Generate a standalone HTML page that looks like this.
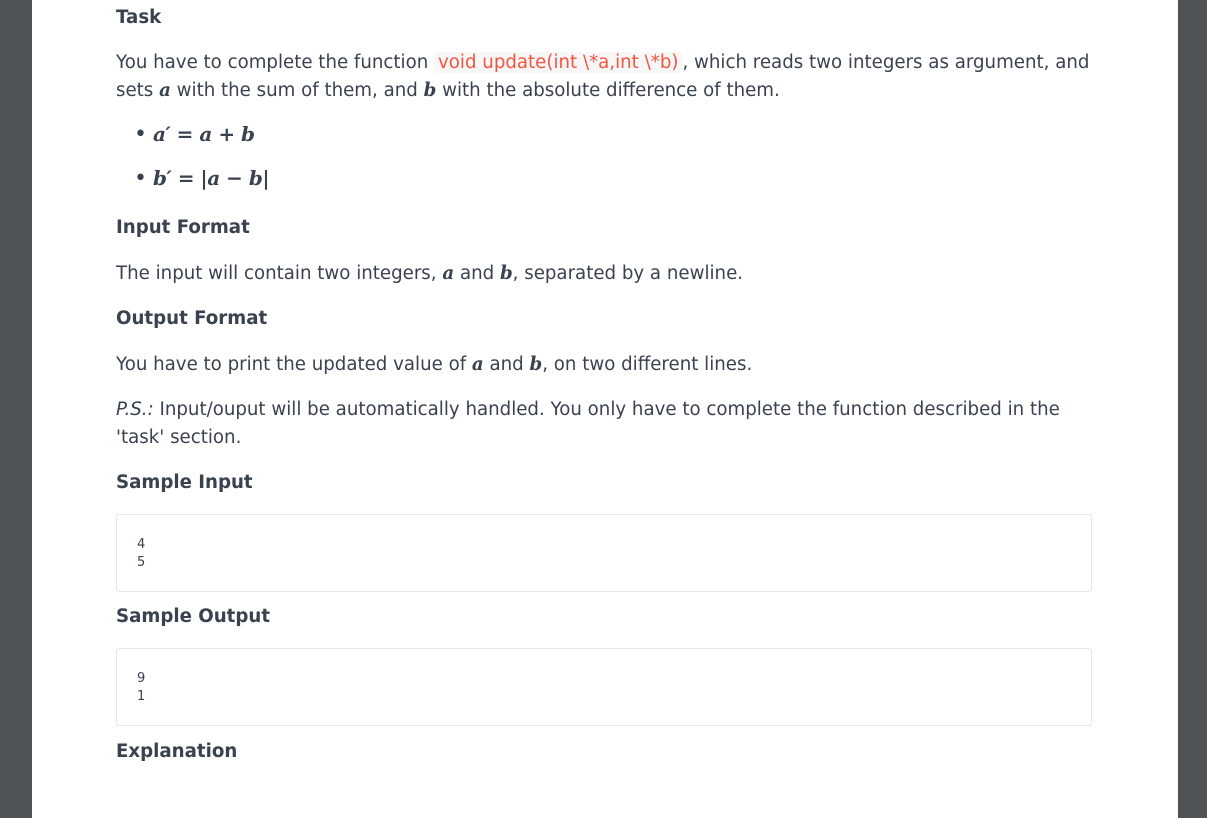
<!DOCTYPE html>
<html><head><meta charset="utf-8"><style>
body{margin:0;width:1207px;height:818px;background:#4f5356;position:relative;overflow:hidden;font-family:"DejaVu Sans","Liberation Sans",sans-serif;color:#39424e;}
.page{position:absolute;left:32px;top:0;width:1146px;height:818px;background:#fff;}
.a{position:absolute;left:116px;white-space:nowrap;font-size:18.2px;line-height:28px;}
h{font-weight:bold;}
.c{color:#f5543f;background:#f7f7f7;padding:0 4px;border-radius:3px;}
.m{font-family:"DejaVu Serif","Liberation Serif",serif;font-style:italic;font-weight:bold;}
.mm{font-family:"DejaVu Serif","Liberation Serif",serif;font-style:italic;font-weight:bold;font-size:20px;letter-spacing:-0.5px;}
.bl{font-size:22px;margin-right:6px;}
.box{position:absolute;left:116px;width:974px;height:76px;border:1px solid #e4e6e8;border-radius:3px;background:#fff;}
.box div{position:absolute;left:20px;top:21px;font-size:13px;line-height:18px;}
</style></head><body>
<div class="page"></div>
<div class="a" style="top:4px"><h>Task</h></div>
<div class="a" style="top:49px">You have to complete the function <span class="c">void update(int \*a,int \*b)</span>, which reads two integers as argument, and</div>
<div class="a" style="top:77px">sets <span class="m">a</span> with the sum of them, and <span class="m">b</span> with the absolute difference of them.</div>
<div class="a" style="left:134px;top:120px"><span class="bl">•</span><span class="mm">a′ = a + b</span></div>
<div class="a" style="left:134px;top:164px"><span class="bl">•</span><span class="mm">b′ = |a − b|</span></div>
<div class="a" style="top:214px"><h>Input Format</h></div>
<div class="a" style="top:260px">The input will contain two integers, <span class="m">a</span> and <span class="m">b</span>, separated by a newline.</div>
<div class="a" style="top:305px"><h>Output Format</h></div>
<div class="a" style="top:351px">You have to print the updated value of <span class="m">a</span> and <span class="m">b</span>, on two different lines.</div>
<div class="a" style="top:396px"><i>P.S.:</i> Input/ouput will be automatically handled. You only have to complete the function described in the</div>
<div class="a" style="top:424px">'task' section.</div>
<div class="a" style="top:469px"><h>Sample Input</h></div>
<div class="box" style="top:514px"><div>4<br>5</div></div>
<div class="a" style="top:603px"><h>Sample Output</h></div>
<div class="box" style="top:648px"><div>9<br>1</div></div>
<div class="a" style="top:738px"><h>Explanation</h></div>
</body></html>
